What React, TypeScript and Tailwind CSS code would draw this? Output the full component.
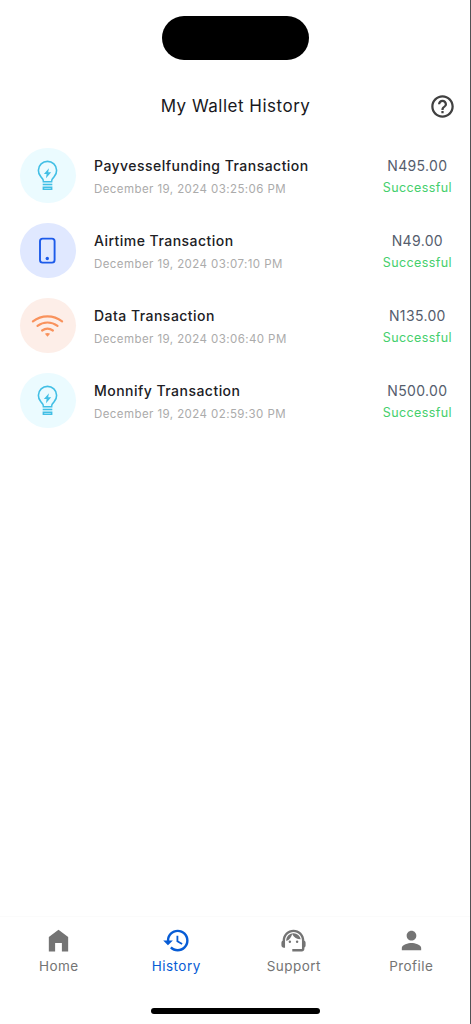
import type { ReactNode } from 'react'
import {
  MdHelpOutline,
  MdHistory,
  MdPerson,
  MdSupportAgent,
} from 'react-icons/md'

type IconKind = 'bulb' | 'phone' | 'wifi'

interface Transaction {
  title: string
  date: string
  amount: string
  icon: IconKind
}

const TRANSACTIONS: Transaction[] = [
  {
    title: 'Payvesselfunding Transaction',
    date: 'December 19, 2024 03:25:06 PM',
    amount: 'N495.00',
    icon: 'bulb',
  },
  {
    title: 'Airtime Transaction',
    date: 'December 19, 2024 03:07:10 PM',
    amount: 'N49.00',
    icon: 'phone',
  },
  {
    title: 'Data Transaction',
    date: 'December 19, 2024 03:06:40 PM',
    amount: 'N135.00',
    icon: 'wifi',
  },
  {
    title: 'Monnify Transaction',
    date: 'December 19, 2024 02:59:30 PM',
    amount: 'N500.00',
    icon: 'bulb',
  },
]

const ICON_STYLES: Record<IconKind, string> = {
  bulb: 'bg-[#ebfbff] text-[#42bfe5]',
  phone: 'bg-[#e0e8ff] text-[#1d5bea]',
  wifi: 'bg-[#fdeee8] text-[#f9925c]',
}

function BulbIcon() {
  return (
    <svg width="32" height="32" viewBox="0 0 32 32" fill="none" stroke="currentColor" strokeWidth="1.6">
      <path d="M11.4 21.8c0-2.6-.8-3.5-2.6-5.2a9.1 9.1 0 1 1 13.4 0c-1.8 1.7-2.6 2.6-2.6 5.2z" />
      <path d="M10.7 24.5h9.6" />
      <path d="M11.4 27.2h8.2v2.1h-8.2z" />
      <path d="M16.9 8.300l-5 5.800h2.700l-.6 4.200 5.200-6.100h-3z" fill="currentColor" stroke="none" />
    </svg>
  )
}

function PhoneIcon() {
  return (
    <svg width="32" height="32" viewBox="0 0 32 32" fill="none">
      <rect x="8" y="3.6" width="14.6" height="24" rx="2.6" stroke="currentColor" strokeWidth="1.9" />
      <circle cx="15.3" cy="23.5" r="1.7" fill="currentColor" />
    </svg>
  )
}

function WifiIcon() {
  return (
    <svg width="34" height="32" viewBox="0 0 34 32" fill="none" stroke="currentColor" strokeWidth="2.2" strokeLinecap="round">
      <path d="M1.9 11.3c8.7-6.6 20.5-6.6 29.2 0" />
      <path d="M6.5 15.8c6-4.4 14-4.4 20 0" />
      <path d="M11.1 20.5c3.2-2.2 7.6-2.2 10.8 0" />
      <path d="M13.9 23.8q2.6-1.5 5.2 0l-2.6 3z" fill="currentColor" stroke="none" />
    </svg>
  )
}

function HomeIcon() {
  return (
    <svg width="29" height="29" viewBox="0 0 24 24" fill="currentColor">
      <path d="M4 21V9l8-6 8 6v12h-5.200v-7H9.200v7z" />
    </svg>
  )
}

const ICONS: Record<IconKind, ReactNode> = {
  bulb: <BulbIcon />,
  phone: <PhoneIcon />,
  wifi: <WifiIcon />,
}

const TABS = [
  { label: 'Home', icon: <HomeIcon />, active: false },
  { label: 'History', icon: <MdHistory size={29} />, active: true },
  { label: 'Support', icon: <MdSupportAgent size={29} />, active: false },
  { label: 'Profile', icon: <MdPerson size={29} />, active: false },
]

function TransactionRow({ title, date, amount, icon }: Transaction) {
  return (
    <li className="flex h-[75px] items-center">
      <div
        className={`flex size-[55.5px] shrink-0 items-center justify-center rounded-full ${ICON_STYLES[icon]}`}
      >
        {ICONS[icon]}
      </div>
      <div className="ml-[18.5px] flex-1 pt-1 whitespace-nowrap">
        <p className="text-[14px] leading-5 font-medium tracking-[0.47px] text-[#202024]">
          {title}
        </p>
        <p className="mt-[3px] text-[11.5px] leading-5 tracking-[0.42px] text-[#ababab]">
          {date}
        </p>
      </div>
      <div className="pt-0.5 text-center whitespace-nowrap">
        <p className="text-[14px] leading-5 tracking-[0.35px] text-[#555d6d]">{amount}</p>
        <p className="mt-0.5 text-[12.5px] leading-5 tracking-[0.4px] text-[#45cf6c]">
          Successful
        </p>
      </div>
    </li>
  )
}

export default function App() {
  return (
    <div className="flex h-screen flex-col border-r border-[#505154] bg-white font-['Inter',sans-serif]">
      {/* Status area */}
      <div className="flex h-[75px] justify-center pt-4">
        <div className="h-[43.5px] w-[147px] rounded-full bg-black" />
      </div>

      {/* Header */}
      <header className="grid h-[62px] grid-cols-[1fr_auto_1fr] items-center pr-3.5">
        <h1 className="col-start-2 ml-[15px] pt-px text-[17px] font-normal tracking-[0.5px] text-[#18181c]">
          My Wallet History
        </h1>
        <MdHelpOutline size={27} className="justify-self-end text-[#414141]" />
      </header>

      {/* Transactions */}
      <ul className="flex-1 pt-px pr-[18px] pl-5">
        {TRANSACTIONS.map((t) => (
          <TransactionRow key={t.date} {...t} />
        ))}
      </ul>

      {/* Bottom navigation */}
      <nav className="flex h-[108px] flex-col border-t border-[#fbfbfb]">
        <div className="flex flex-1 pt-[9px]">
          {TABS.map((tab) => (
            <div
              key={tab.label}
              className={`flex flex-1 flex-col items-center ${
                tab.active ? 'text-[#075cd5]' : 'text-[#747474]'
              }`}
            >
              {tab.icon}
              <span className="mt-px text-[13.5px] leading-5 tracking-[0.45px]">{tab.label}</span>
            </div>
          ))}
        </div>
        <div className="mx-auto mb-2.5 h-1.5 w-[169px] rounded-full bg-black" />
      </nav>
    </div>
  )
}
